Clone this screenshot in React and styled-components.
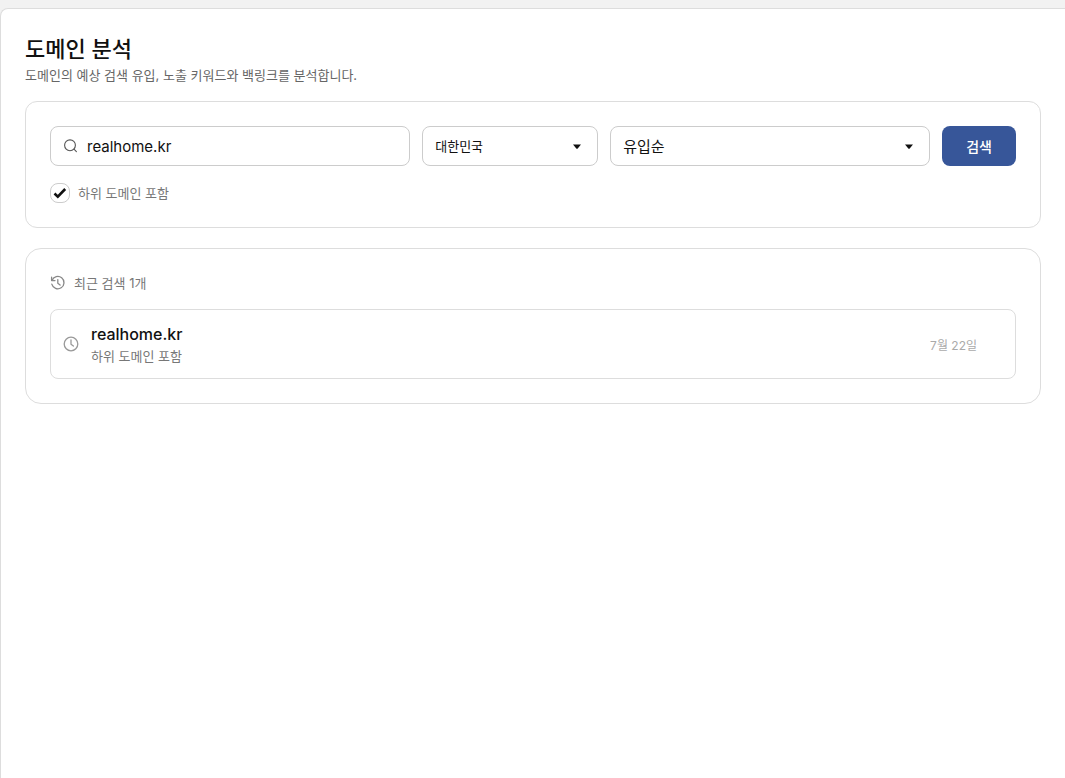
import React, { useState } from 'react';
import styled, { createGlobalStyle } from 'styled-components';

const App = () => {

  const [domain, setDomain] = useState('realhome.kr');
  const [includeSub, setIncludeSub] = useState(true);

  return (
    <>
      <GlobalStyle />
      <Page>
        <Title>도메인 분석</Title>
        <Description>도메인의 예상 검색 유입, 노출 키워드와 백링크를 분석합니다.</Description>

        <SearchCard onSubmit={(e) => e.preventDefault()}>
          <SearchRow>
            <SearchField>
              <SearchIcon />
              <SearchInput
                type="text"
                aria-label="도메인"
                value={domain}
                onChange={(e) => setDomain(e.target.value)}
              />
            </SearchField>
            <SelectField label="국가" size="13px" options={['대한민국', '미국', '일본']} />
            <SelectField label="정렬" size="15px" options={['유입순', '키워드순']} />
            <SubmitButton type="submit">검색</SubmitButton>
          </SearchRow>
          <CheckLabel>
            <CheckWrap>
              <Checkbox
                type="checkbox"
                checked={includeSub}
                onChange={(e) => setIncludeSub(e.target.checked)}
              />
              {includeSub ? <CheckIcon /> : null}
            </CheckWrap>
            하위 도메인 포함
          </CheckLabel>
        </SearchCard>

        <HistoryCard>
          <HistoryTitle>
            <HistoryIcon />
            최근 검색 1개
          </HistoryTitle>
          <HistoryItem type="button" onClick={() => setDomain('realhome.kr')}>
            <ClockIcon />
            <ItemText>
              <ItemDomain>realhome.kr</ItemDomain>
              <ItemNote>하위 도메인 포함</ItemNote>
            </ItemText>
            <ItemDate>7월 22일</ItemDate>
          </HistoryItem>
        </HistoryCard>
      </Page>
    </>
  );
}

const SelectField = (props) => (
  <SelectWrap>
    <Select aria-label={props.label} $size={props.size}>
      {props.options.map((option) => (
        <option key={option}>{option}</option>
      ))}
    </Select>
    <Caret width="8" height="5" viewBox="0 0 8 5" aria-hidden="true">
      <path d="M0 0.6h8L4.5 4.8h-1z" fill="#111" />
    </Caret>
  </SelectWrap>
);

const SearchIcon = () => (
  <Icon $color="#555" viewBox="0 0 16 16" aria-hidden="true">
    <circle cx="7" cy="7.3" r="5.4" />
    <path d="M11 11.2 13.4 13.6" />
  </Icon>
);

const CheckIcon = () => (
  <CheckMark viewBox="0 0 14 12" aria-hidden="true">
    <path d="M1.5 6.5 4.8 9.6 12.2 2" />
  </CheckMark>
);

const HistoryIcon = () => (
  <Icon $color="#888" $weight="1.3" viewBox="0 0 16 16" aria-hidden="true">
    <path d="M1.6 2.2v3.4h3.4" />
    <path d="M2 5.4A6.2 6.2 0 1 1 1.8 9.2" />
    <path d="M7.8 4.6v3.6l2.3 1.8" />
  </Icon>
);

const ClockIcon = () => (
  <Icon $color="#999" $weight="1.3" viewBox="0 0 16 16" aria-hidden="true">
    <circle cx="8" cy="8" r="6.8" />
    <path d="M8 4v4.2l2.4 1.8" />
  </Icon>
);

const GlobalStyle = createGlobalStyle`
  * {
    box-sizing: border-box;
  }

  body {
    margin: 0;
    background-color: #f2f2f2;
    color: #111;
    font-family: Inter, 'Noto Sans CJK KR', sans-serif;
  }

  input, select, button {
    font-family: inherit;
    color: inherit;
    margin: 0;
  }
`;

const Page = styled.main`
  margin-top: 8px;
  min-height: calc(100vh - 8px);
  padding: 24px;
  background-color: #fff;
  border-top: 1px solid #ddd;
  border-left: 1px solid #ddd;
  border-top-left-radius: 8px;
`;

const Title = styled.h1`
  margin: 0;
  font-size: 22px;
  font-weight: 500;
  line-height: 32px;
`;

const Description = styled.p`
  margin: 0 0 16px;
  color: #666;
  font-size: 13px;
  line-height: 20px;
`;

const SearchCard = styled.form`
  padding: 24px;
  border: 1px solid #ddd;
  border-radius: 12px;
`;

const SearchRow = styled.div`
  display: grid;
  grid-template-columns: minmax(0, 1fr) 176px 320px auto;
  gap: 12px;
  margin-bottom: 16px;

  @media (max-width: 860px) {
    grid-template-columns: 1fr;
  }
`;

const SearchField = styled.div`
  display: flex;
  align-items: center;
  gap: 8px;
  height: 40px;
  padding: 0 12px;
  border: 1px solid #ccc;
  border-radius: 8px;
`;

const SearchInput = styled.input`
  flex: 1;
  min-width: 0;
  padding: 0;
  border: none;
  outline: none;
  background: none;
  font-size: 15px;
`;

const SelectWrap = styled.div`
  display: grid;
  align-items: center;
`;

const Select = styled.select`
  grid-area: 1 / 1;
  width: 100%;
  height: 40px;
  padding: 0 12px;
  appearance: none;
  background-color: #fff;
  border: 1px solid #ccc;
  border-radius: 8px;
  font-size: ${({ $size }) => $size};
`;

const Caret = styled.svg`
  grid-area: 1 / 1;
  justify-self: end;
  margin-right: 17px;
  pointer-events: none;
`;

const SubmitButton = styled.button`
  height: 40px;
  padding: 0 24px;
  border: none;
  border-radius: 8px;
  background-color: #375699;
  color: #fff;
  font-size: 14px;
  font-weight: 500;
  cursor: pointer;
`;

const CheckLabel = styled.label`
  display: flex;
  align-items: center;
  gap: 8px;
  width: fit-content;
  height: 21px;
  color: #777;
  font-size: 13px;
  cursor: pointer;
`;

const CheckWrap = styled.span`
  display: grid;
  place-items: center;
`;

const Checkbox = styled.input`
  grid-area: 1 / 1;
  width: 20px;
  height: 20px;
  appearance: none;
  background-color: #fff;
  border: 1px solid #ccc;
  border-radius: 8px;
`;

const CheckMark = styled.svg`
  grid-area: 1 / 1;
  width: 14px;
  height: 12px;
  fill: none;
  stroke: #111;
  stroke-width: 2.6;
  pointer-events: none;
`;

const HistoryCard = styled.section`
  margin-top: 20px;
  padding: 24px;
  border: 1px solid #ddd;
  border-radius: 16px;
`;

const HistoryTitle = styled.h2`
  display: flex;
  align-items: center;
  gap: 8px;
  margin: 0 0 16px;
  color: #777;
  font-size: 13px;
  font-weight: 400;
  line-height: 20px;
`;

const HistoryItem = styled.button`
  display: flex;
  align-items: center;
  gap: 12px;
  width: 100%;
  padding: 12px 38px 12px 12px;
  background-color: #fff;
  border: 1px solid #ddd;
  border-radius: 8px;
  text-align: left;
  cursor: pointer;
`;

const ItemText = styled.span`
  display: flex;
  flex: 1;
  flex-direction: column;
`;

const ItemDomain = styled.span`
  font-size: 16px;
  font-weight: 500;
  line-height: 24px;
`;

const ItemNote = styled.span`
  color: #777;
  font-size: 13px;
  line-height: 20px;
`;

const ItemDate = styled.span`
  color: #aaa;
  font-size: 12px;
`;

const Icon = styled.svg`
  flex: none;
  width: 16px;
  height: 16px;
  fill: none;
  stroke: ${({ $color }) => $color};
  stroke-width: ${({ $weight }) => $weight || 1.1};
  stroke-linecap: round;
  stroke-linejoin: round;
`;

export default App;
